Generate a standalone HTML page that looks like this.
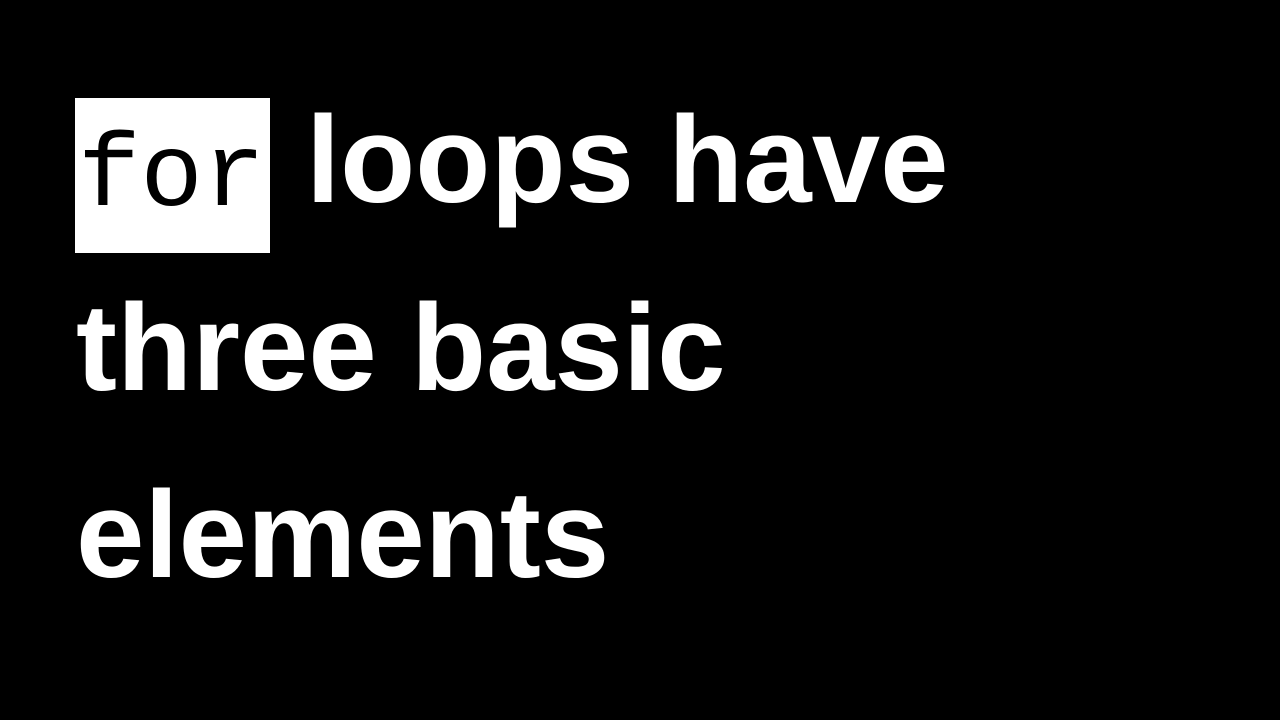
<!DOCTYPE html>
<html><head><meta charset="utf-8"><style>
html,body{margin:0;padding:0;background:#000;width:1280px;height:720px;overflow:hidden}
.t{position:absolute;left:76px;font-family:"Liberation Sans",Arial,sans-serif;font-weight:bold;font-size:123px;line-height:124px;color:#fff;white-space:nowrap}
.box{position:absolute;left:75px;top:98px;width:195px;height:155px;background:#fff}
.mono{position:absolute;left:78px;font-family:"Liberation Mono","Courier New",monospace;font-size:104px;line-height:104px;color:#000;white-space:nowrap}
</style></head><body>
<div class="box"></div>
<div class="mono" style="top:126px">for</div>
<div class="t" style="left:306px;top:99px">loops have</div>
<div class="t" style="top:287px">three basic</div>
<div class="t" style="top:474px">elements</div>
</body></html>
